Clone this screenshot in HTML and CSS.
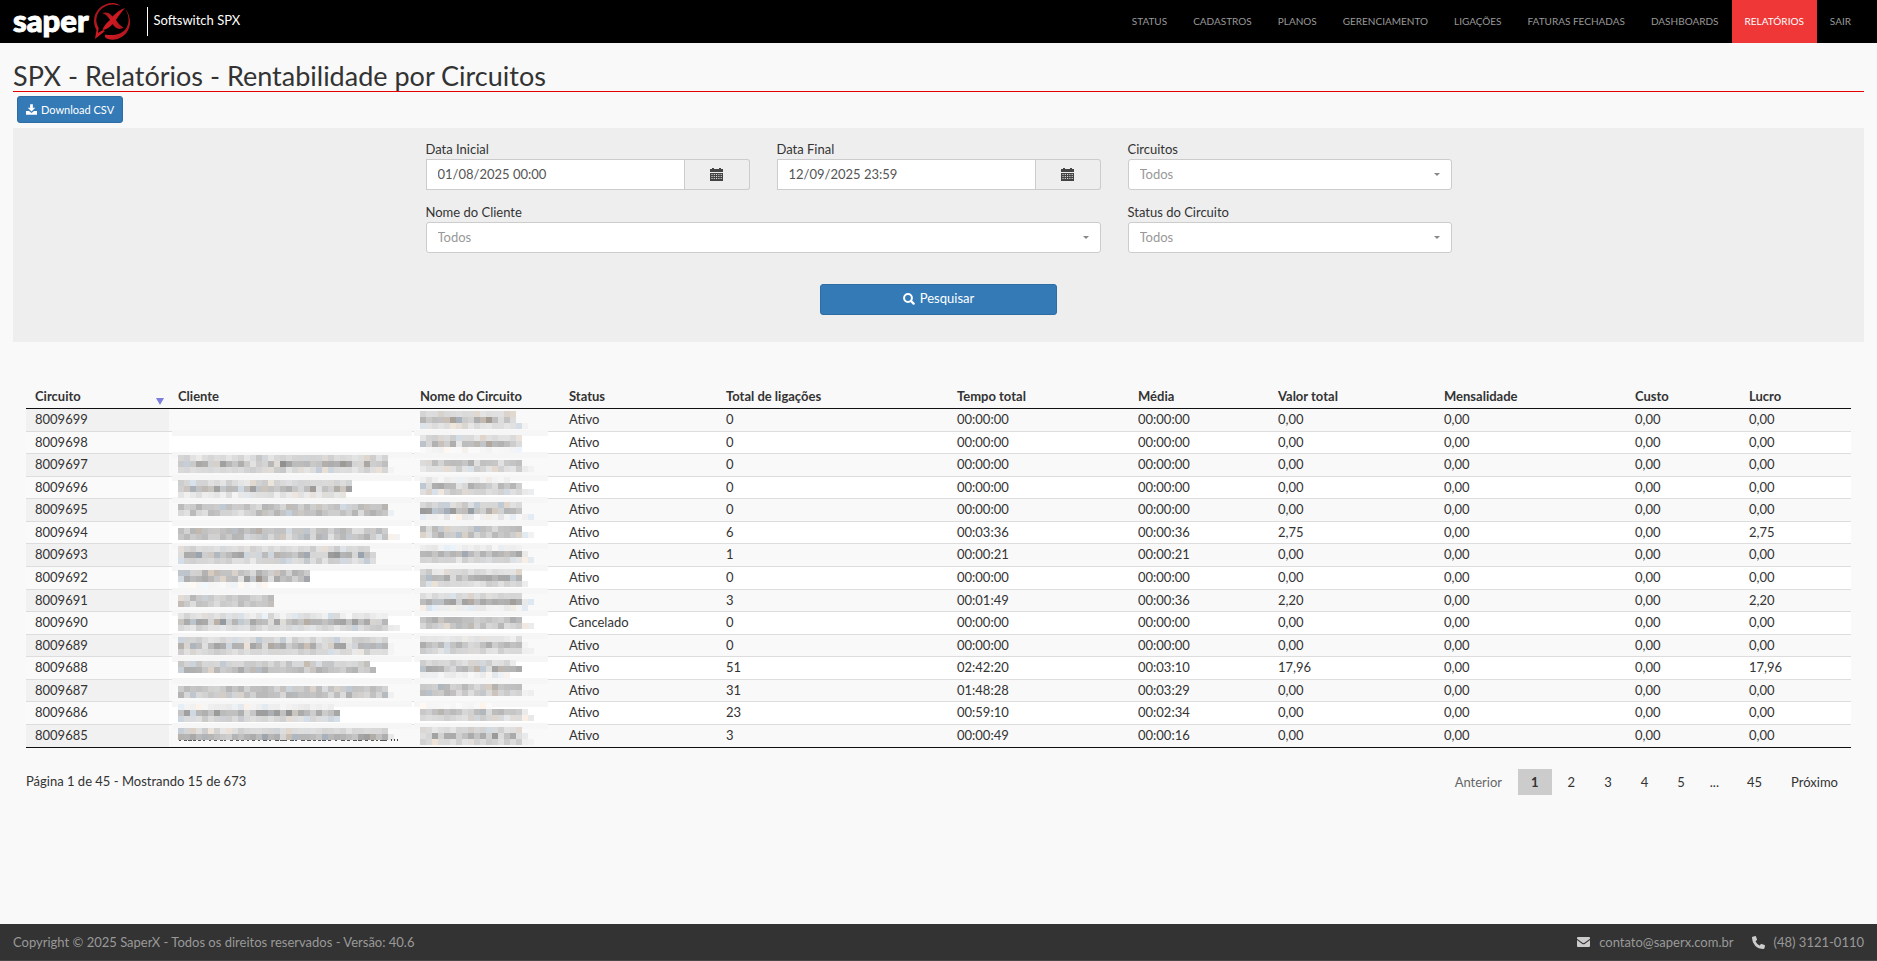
FILE: index.html
```html
<!DOCTYPE html>
<html lang="pt-BR">
<head>
<meta charset="utf-8">
<title>SPX - Relatórios - Rentabilidade por Circuitos</title>
<link rel="stylesheet" href="styles.css">
</head>
<body>
<header class="topbar">
  <a class="brand" href="#">
    <span class="brand-name">saper</span>
    <svg class="brand-mark" viewBox="0 0 36 37" aria-hidden="true">
      <defs><linearGradient id="red" x1="0" y1="0" x2="1" y2="1"><stop offset="0" stop-color="#8d1218"/><stop offset=".5" stop-color="#d01a22"/><stop offset="1" stop-color="#a3141b"/></linearGradient></defs>
      <path fill="url(#red)" d="M19 0C8 0 0 8 0 18c0 4 1.500 7 2.500 9L1 36l10-8-2-1-5 3 .6-5C2.500 21 2 18 2.500 15 4 7 11 1.500 19 1.500c2.500 0 5 .5 7 1.500C24 .8 21.500 0 19 0z"/>
      <path fill="url(#red)" d="M31 6c3 4 4 8 3.500 13-1 8-8 13-16 13-3 0-4.500.2-7-.5-1.500 2 0 3.500 2 4.300 3 1 6 1.200 10 .2 8-2.500 12.500-9.500 12.500-17 0-5-2-10-5-13z"/>
      <path fill="url(#red)" d="M8 10c5-1.500 7.500 0 10.500 3.500C22.500 9.500 26 6.500 31 5c-3 3.500-6.500 7.500-9 12 2 3 4 6 7.500 7.500-4.500 3-8 1-11-3.500-3 3.500-6.500 6-10 6 1.200-4 4.500-7.500 7.500-10C14 13.500 11.500 11 8 10z"/>
    </svg>
  </a>
  <span class="product">Softswitch SPX</span>
  <nav class="menu">
    <a href="#">Status</a><a href="#">Cadastros</a><a href="#">Planos</a><a href="#">Gerenciamento</a><a href="#">Ligações</a><a href="#">Faturas Fechadas</a><a href="#">Dashboards</a><a class="active" href="#">Relatórios</a><a href="#">Sair</a>
  </nav>
</header>

<main class="content">
  <h1>SPX - Relatórios - Rentabilidade por Circuitos</h1>
  <button class="btn btn-small" type="button">
    <svg width="11" height="11" viewBox="0 0 16 15" aria-hidden="true"><path fill="#fff" d="M6 0h4v5h3.500L8 10.500 2.500 5H6zM0 9.500h4.500L8 12.500l3.500-3H16V15H0z"/></svg>
    Download CSV
  </button>

  <form class="filters">
    <div class="fields">
      <div class="field">
        <label for="ini">Data Inicial</label>
        <div class="date"><input id="ini" type="text" value="01/08/2025 00:00"><button type="button" aria-label="Abrir calendário"><svg width="13" height="13" viewBox="0 0 13 13"><path fill="#444" d="M0 1h2V0h2v1h5V0h2v1h2v3H0zM0 5h13v8H0z"/><path stroke="#eee" stroke-dasharray="1 1.300" d="M1.500 6.500h10.500M1.500 8.500h10.500M1.500 10.500h10.500"/></svg></button></div>
      </div>
      <div class="field">
        <label for="fim">Data Final</label>
        <div class="date"><input id="fim" type="text" value="12/09/2025 23:59"><button type="button" aria-label="Abrir calendário"><svg width="13" height="13" viewBox="0 0 13 13"><path fill="#444" d="M0 1h2V0h2v1h5V0h2v1h2v3H0zM0 5h13v8H0z"/><path stroke="#eee" stroke-dasharray="1 1.300" d="M1.500 6.500h10.500M1.500 8.500h10.500M1.500 10.500h10.500"/></svg></button></div>
      </div>
      <div class="field">
        <label for="circ">Circuitos</label>
        <div class="pick"><select id="circ"><option>Todos</option></select></div>
      </div>
      <div class="field wide">
        <label for="cli">Nome do Cliente</label>
        <div class="pick"><select id="cli"><option>Todos</option></select></div>
      </div>
      <div class="field">
        <label for="sta">Status do Circuito</label>
        <div class="pick"><select id="sta"><option>Todos</option></select></div>
      </div>
    </div>
    <button class="btn search" type="button">
      <svg width="12" height="12" viewBox="0 0 12 12" aria-hidden="true"><circle cx="5" cy="5" r="3.900" fill="none" stroke="#fff" stroke-width="2"/><path stroke="#fff" stroke-width="2.400" stroke-linecap="round" d="M8 8l2.600 2.600"/></svg>
      Pesquisar
    </button>
  </form>

  <section class="report">
    <table>
      <colgroup><col class="c1"><col class="c2"><col class="c3"><col class="c4"><col class="c5"><col class="c6"><col class="c7"><col class="c8"><col class="c9"><col class="c10"><col class="c11"></colgroup>
      <thead><tr><th class="sorted">Circuito</th><th>Cliente</th><th>Nome do Circuito</th><th>Status</th><th>Total de ligações</th><th>Tempo total</th><th>Média</th><th>Valor total</th><th>Mensalidade</th><th>Custo</th><th>Lucro</th></tr></thead>
      <tbody id="rows"></tbody>
    </table>
    <div class="table-foot">
      <span class="info">Página 1 de 45 - Mostrando 15 de 673</span>
      <nav class="pager"><a class="off" href="#">Anterior</a><a class="current" href="#">1</a><a href="#">2</a><a href="#">3</a><a href="#">4</a><a href="#">5</a><span>...</span><a href="#">45</a><a href="#">Próximo</a></nav>
    </div>
  </section>
</main>

<footer class="footer">
  <span>Copyright © 2025 SaperX - Todos os direitos reservados - Versão: 40.6</span>
  <span class="contacts">
    <a href="#"><svg width="13" height="10" viewBox="0 0 13 10" aria-hidden="true"><path fill="#ccc" d="M1 0h11q1 0 1 1v.8L7.500 5.800q-1 .7-2 0L0 1.800V1q0-1 1-1zM0 3l5 3.700q1.500 1 3 0L13 3v6q0 1-1 1H1q-1 0-1-1z"/></svg>contato@saperx.com.br</a>
    <a href="#"><svg width="13" height="13" viewBox="0 0 13 13" aria-hidden="true"><path fill="#ccc" d="M3.200 0Q3.800 0 4 .6L5 3.200q.2.600-.3 1L3.500 5.200Q4.700 8 7.700 9.500l1-1.300q.4-.5 1-.3l2.800 1.200q.6.300.5.900l-.6 2.300q-.2.700-.9.700Q6.500 13 3.200 9.700T0 1.500Q0 .9.700.7z"/></svg>(48) 3121-0110</a>
  </span>
</footer>
<script src="report.js"></script>
</body>
</html>
```
FILE: report.js
```js
const data = [
  ["8009699", "Ativo", "0", "00:00:00", "00:00:00", "0,00"],
  ["8009698", "Ativo", "0", "00:00:00", "00:00:00", "0,00"],
  ["8009697", "Ativo", "0", "00:00:00", "00:00:00", "0,00"],
  ["8009696", "Ativo", "0", "00:00:00", "00:00:00", "0,00"],
  ["8009695", "Ativo", "0", "00:00:00", "00:00:00", "0,00"],
  ["8009694", "Ativo", "6", "00:03:36", "00:00:36", "2,75"],
  ["8009693", "Ativo", "1", "00:00:21", "00:00:21", "0,00"],
  ["8009692", "Ativo", "0", "00:00:00", "00:00:00", "0,00"],
  ["8009691", "Ativo", "3", "00:01:49", "00:00:36", "2,20"],
  ["8009690", "Cancelado", "0", "00:00:00", "00:00:00", "0,00"],
  ["8009689", "Ativo", "0", "00:00:00", "00:00:00", "0,00"],
  ["8009688", "Ativo", "51", "02:42:20", "00:03:10", "17,96"],
  ["8009687", "Ativo", "31", "01:48:28", "00:03:29", "0,00"],
  ["8009686", "Ativo", "23", "00:59:10", "00:02:34", "0,00"],
  ["8009685", "Ativo", "3", "00:00:49", "00:00:16", "0,00"]
];

const body = document.getElementById("rows");
for (const [id, status, calls, time, avg, value] of data) {
  const tr = body.insertRow();
  for (const text of [id, "", "", status, calls, time, avg, value, "0,00", "0,00", value]) {
    tr.insertCell().textContent = text;
  }
}

// Redacted columns: each line is [top, [cells, tone, spread], ...].
// Tone is the mean grey of a strip of cells, spread how far cells stray from it.
const L = [217, 12], M = [188, 30], E = [200, 18], F = [238, 8];
const client = {
  width: 240,
  lines: [
    [45, [35, ...L], [35, ...M], [36, ...L]],
    [70, [29, ...L], [29, ...M], [28, 230, 10]],
    [94, [35, ...E], [36, ...E]],
    [118, [35, ...E], [37, ...E]],
    [136, [32, ...L], [33, ...M], [33, ...L]],
    [160, [22, ...E], [22, ...M], [15, 248, 4]],
    [185, [16, ...E], [16, ...E]],
    [203, [35, 228, 14], [35, ...M], [37, ...L]],
    [227, [35, ...L], [36, ...M], [36, ...L]],
    [251, [32, 208, 14], [33, 190, 16]],
    [276, [35, ...E], [36, ...E]],
    [294, [26, ...F], [27, ...M], [27, ...L]],
    [318, [35, ...L], [36, 185, 20]]
  ]
};
const circuit = {
  width: 134,
  lines: [
    [1, [16, ...L], [16, ...M], [18, 225, 8]],
    [25, [17, ...L], [17, ...M], [17, 246, 6]],
    [50, [17, ...E], [19, ...L]],
    [67, [15, ...F], [17, ...M], [19, ...L]],
    [92, [17, ...L], [17, ...M], [19, ...F]],
    [116, [17, ...E], [19, ...E]],
    [135, [17, ...F], [18, 182, 16], [19, ...L]],
    [159, [17, ...L], [17, ...M], [18, ...L]],
    [183, [17, ...L], [19, 180, 20], [18, ...F]],
    [207, [17, 190, 18], [19, ...E]],
    [226, [17, 230, 8], [18, 195, 20], [19, ...L]],
    [250, [16, ...L], [17, ...M], [15, ...F]],
    [274, [17, ...E], [19, ...E]],
    [293, [12, 248, 5], [18, 195, 18], [19, ...L]],
    [317, [17, ...L], [18, ...M], [19, ...L]]
  ]
};

let seed = 11;
const random = () => (seed = (seed * 16807) % 2147483647) / 2147483647;
const rect = (x, y, w, h, fill) => `<rect x="${x}" y="${y}" width="${w}" height="${h}" fill="${fill}"/>`;

function mosaic({ width, lines }, name, extra = "") {
  let out = "";
  for (let i = 1; i < 15; i++) out += rect(0, Math.round(i * 22.6) - 2, width, 6, "#f6f6f6");
  for (const [top, ...strips] of lines) {
    strips.forEach(([count, tone, spread], s) => {
      for (let c = 0; c < count; c++) {
        let v = tone + (random() + random() - 1) * spread * 1.5;
        if (c > 34 || (width < 200 && c > 16)) v = 232 + random() * 12;
        const warm = random() > .75 ? (random() - .5) * 22 : 0;
        const g = Math.min(250, Math.round(v));
        out += rect(6 + c * 6, top + 1 + s * 6, 6, 6, `rgb(${Math.min(255, Math.round(g + warm))},${g},${Math.min(255, Math.round(g - warm))})`);
      }
    });
  }
  return `<svg class="mosaic ${name}" width="${width}" height="338" viewBox="0 0 ${width} 338" shape-rendering="crispEdges" aria-hidden="true">${out}${extra}</svg>`;
}

// Lower edge of the last client line, left visible under its cells.
let edge = "";
for (let x = 7; x < 218; x += 4 + Math.round(random() * 3)) edge += rect(x, 331, 2 + Math.round(random() * 2), 1, "#555");
for (const x of [219, 222, 225]) edge += rect(x, 330, 1, 2, "#444");

body.rows[0].cells[1].innerHTML = mosaic(client, "client", edge);
body.rows[0].cells[2].innerHTML = mosaic(circuit, "circuit");
```
FILE: styles.css
```css
* { box-sizing: border-box; }
body {
  margin: 0;
  min-height: 100vh;
  display: flex;
  flex-direction: column;
  background: #f9f9f9;
  color: #333;
  font: 13px/1.42857 Lato, "Liberation Sans", sans-serif;
}
a { color: inherit; text-decoration: none; }
button, input, select { font: inherit; color: inherit; }

.topbar { display: flex; align-items: center; height: 43px; padding: 0 13px; background: #000; color: #fff; }
.brand { display: flex; align-items: center; gap: 5px; }
.brand-name { font-size: 31px; font-weight: 900; line-height: 36px; padding-bottom: 4px; -webkit-text-stroke: 1px #fff; }
.brand-mark { width: 36px; height: 37px; }
.product { margin-left: 17px; padding: 0 6px; border-left: 1px solid #fff; height: 29px; line-height: 27px; }
.menu { display: flex; margin-left: auto; font-size: 10px; line-height: 43px; text-transform: uppercase; color: #999; }
.menu a { padding: 0 13px; }
.menu .active { background: #ef3737; color: #fff; }

.content { padding: 15px 13px 0; }
h1 { margin: 0 0 4px; height: 34px; border-bottom: 1px solid #e60000; font-size: 27px; font-weight: 400; line-height: 36px; }
.btn { display: flex; align-items: center; justify-content: center; gap: 5px; border: 1px solid #2e6da4; border-radius: 3px; background: #337ab7; color: #fff; }
.btn-small { gap: 4px; margin-left: 4px; height: 27px; padding: 0 8px; font-size: 11px; }

.filters { margin-top: 5px; padding: 12px 0 27px; background: #eee; display: flex; flex-direction: column; align-items: center; }
.fields { display: grid; grid-template-columns: repeat(3, 1fr); gap: 13px 27px; width: 100%; max-width: 1026px; }
.wide { grid-column: span 2; }
.field label { display: block; line-height: 19px; }
.date { display: flex; height: 31px; }
.date input { flex: 1; min-width: 0; padding: 0 11px; border: 1px solid #ccc; border-radius: 0; background: #fff; color: #555; }
.date button { display: flex; align-items: center; justify-content: center; width: 65px; border: 1px solid #ccc; border-left: 0; border-radius: 0 3px 3px 0; background: #eee; }
.pick { position: relative; }
.pick select { display: block; width: 100%; height: 31px; padding: 0 11px; appearance: none; border: 1px solid #ccc; border-radius: 3px; background: #fff; color: #999; }
.pick::after { content: ""; position: absolute; right: 12px; top: 14px; border: 3px solid transparent; border-top-color: #888; border-bottom: 0; }
.search { margin-top: 31px; width: 237px; height: 31px; padding: 0 0 2px; }

.report { padding: 44px 13px 0; }
table { width: 100%; table-layout: fixed; border-collapse: separate; border-spacing: 0; border-bottom: 1px solid #111; }
.c1 { width: 143px; } .c2 { width: 242px; } .c3 { width: 149px; } .c4 { width: 157px; } .c5 { width: 231px; } .c6 { width: 181px; }
.c7 { width: 140px; } .c8 { width: 166px; } .c9 { width: 191px; } .c10 { width: 114px; } .c11 { width: 111px; }
th { position: relative; height: 23px; padding: 0 9px 2px; border-bottom: 1px solid #111; text-align: left; line-height: 19px; }
.sorted::after { content: ""; position: absolute; right: 5px; bottom: 3px; border: 4px solid transparent; border-top: 7px solid #7b80e0; border-bottom: 0; }
td { position: relative; padding: 1px 9px 2px; border-bottom: 1px solid #ddd; white-space: nowrap; }
tbody tr:nth-child(even) { background: #fff; }
tbody td:first-child { background: #fafafa; }
tbody tr:nth-child(odd) td:first-child { background: #f1f1f1; }
tbody tr:last-child td { border-bottom: 0; padding-bottom: 3px; }
.mosaic { position: absolute; z-index: 1; top: 0; left: 3px; }

.table-foot { display: flex; justify-content: space-between; margin-top: 21px; }
.info { line-height: 25px; }
.pager { display: flex; line-height: 26px; }
.pager a { margin-left: 3px; padding: 0 13px; }
.pager span { padding: 0 12px; }
.pager .off { color: #666; }
.pager .current { background: #ccc; font-weight: 700; }

.footer { display: flex; justify-content: space-between; align-items: center; height: 37px; margin-top: auto; padding: 0 13px; border-bottom: 1px solid #484848; background: #333; color: #999; }
.contacts { display: flex; gap: 18px; }
.contacts a { display: flex; align-items: center; gap: 9px; }
```
